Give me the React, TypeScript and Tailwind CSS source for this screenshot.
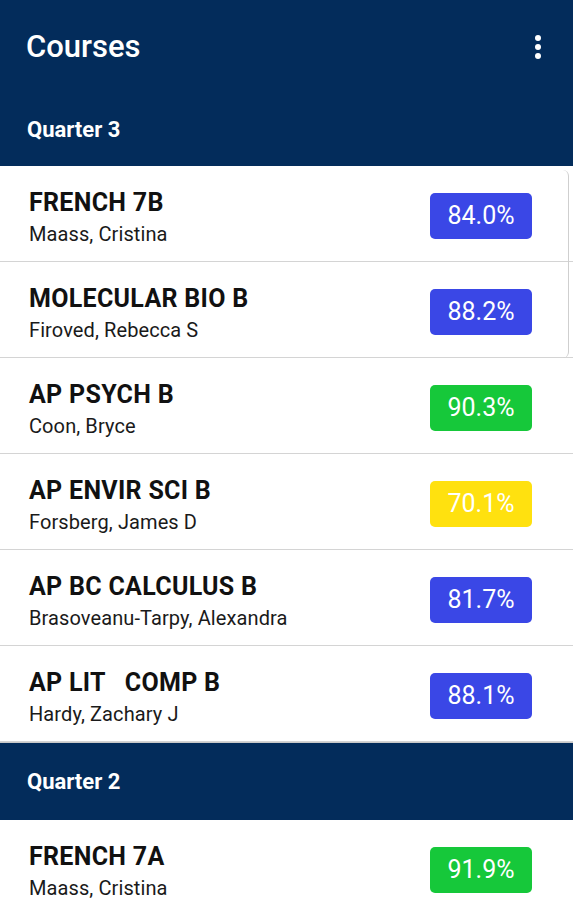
import React from "react";

type Course = { name: string; teacher: string; grade: string; color: string };

const q3: Course[] = [
  { name: "FRENCH 7B", teacher: "Maass, Cristina", grade: "84.0%", color: "bg-[#3a47e6]" },
  { name: "MOLECULAR BIO B", teacher: "Firoved, Rebecca S", grade: "88.2%", color: "bg-[#3a47e6]" },
  { name: "AP PSYCH B", teacher: "Coon, Bryce", grade: "90.3%", color: "bg-[#16c83a]" },
  { name: "AP ENVIR SCI B", teacher: "Forsberg, James D", grade: "70.1%", color: "bg-[#ffe10f]" },
  { name: "AP BC CALCULUS B", teacher: "Brasoveanu-Tarpy, Alexandra", grade: "81.7%", color: "bg-[#3a47e6]" },
  { name: "AP LIT   COMP B", teacher: "Hardy, Zachary J", grade: "88.1%", color: "bg-[#3a47e6]" },
];

const q2: Course[] = [
  { name: "FRENCH 7A", teacher: "Maass, Cristina", grade: "91.9%", color: "bg-[#16c83a]" },
];

function Row({ c }: { c: Course }) {
  return (
    <div className="flex h-[96px] items-center justify-between border-b border-[#d4d4d4] bg-white pl-[29px] pr-[41px]">
      <div className="flex flex-col pt-[7px]">
        <div className="whitespace-pre text-[25px] font-bold leading-[30px] tracking-[0.3px] text-[#111]">{c.name}</div>
        <div className="mt-[4px] text-[20px] leading-[24px] tracking-[0.1px] text-[#1a1a1a]">{c.teacher}</div>
      </div>
      <div
        className={
          "mt-[4px] flex h-[46px] w-[102px] items-center justify-center rounded-[5px] text-[25px] text-white " + c.color
        }
      >
        {c.grade}
      </div>
    </div>
  );
}

export default function App() {
  return (
    <div className="h-[900px] w-[573px] overflow-hidden bg-white" style={{ fontFamily: "Roboto, 'Liberation Sans', sans-serif" }}>
      <div className="bg-[#032c5b]">
        <div className="flex h-[92px] items-center justify-between pl-[26px] pr-[28px] pt-[2px]">
          <div className="text-[31px] font-medium text-white">Courses</div>
          <svg width="10" height="26" viewBox="0 0 10 26" className="mr-[2px]">
            <circle cx="5" cy="4" r="3" fill="white" />
            <circle cx="5" cy="13" r="3" fill="white" />
            <circle cx="5" cy="22" r="3" fill="white" />
          </svg>
        </div>
        <div className="flex h-[74px] items-center pl-[27px] text-[22px] font-bold text-white">Quarter 3</div>
      </div>
      <div className="relative">
        <div className="absolute right-[4px] top-[4px] h-[188px] w-[8px] rounded-r-[6px] border-r border-[#cfcfcf]" />
        {q3.map((c) => (
          <Row key={c.name} c={c} />
        ))}
      </div>
      <div className="flex h-[78px] items-center border-t border-[#c9c9c9] bg-[#032c5b] pl-[27px] text-[22px] font-bold text-white">
        Quarter 2
      </div>
      {q2.map((c) => (
        <Row key={c.name} c={c} />
      ))}
    </div>
  );
}
